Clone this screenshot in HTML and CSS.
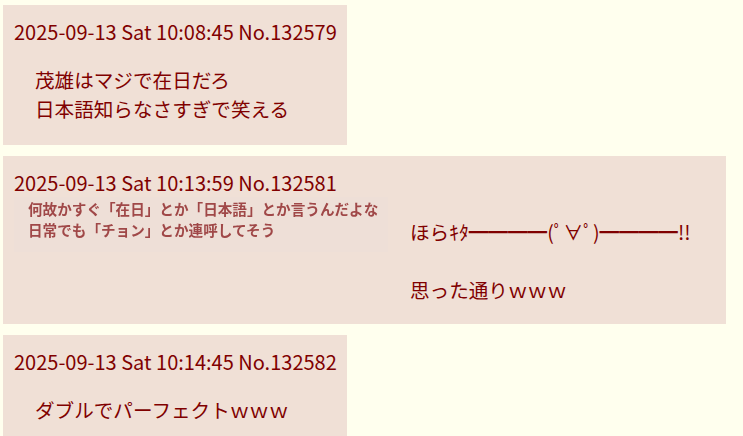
FILE: index.html
```html
<!DOCTYPE html>
<html lang="ja">
<head>
<meta charset="utf-8">
<title>thread</title>
<link rel="stylesheet" href="styles.css">
</head>
<body>
<div class="thread">
  <div class="post">
    <div class="head">2025-09-13 Sat 10:08:45 No.132579</div>
    <div class="quote">茂雄はマジで在日だろ<br>日本語知らなさすぎで笑える</div>
  </div>
  <div class="post">
    <div class="head">2025-09-13 Sat 10:13:59 No.132581</div>
    <div class="media-row">
      <div class="thumb">何故かすぐ「在日」とか「日本語」とか言うんだよな<br>日常でも「チョン」とか連呼してそう</div>
      <div class="quote quote-side">ほらｷﾀ━━━━(ﾟ∀ﾟ)━━━━!!<br><br>思った通りｗｗｗ</div>
    </div>
  </div>
  <div class="post">
    <div class="head">2025-09-13 Sat 10:14:45 No.132582</div>
    <div class="quote">ダブルでパーフェクトｗｗｗ</div>
  </div>
</div>
</body>
</html>
```

FILE: styles.css
```css
html, body {
  margin: 0;
  padding: 0;
  background: #ffffee;
}
body {
  padding: 5px 0 0 3px;
  font-family: "Noto Sans CJK JP", "Noto Sans", sans-serif;
  color: #800000;
  font-size: 19.6px;
  line-height: 29px;
}
.thread {
  display: flex;
  flex-direction: column;
  align-items: flex-start;
  gap: 11px;
}
.post {
  background: #f0e0d6;
  padding: 12px 10px 22px 11px;
}
.post:nth-child(1),
.post:nth-child(3) {
  width: 323px;
}
.post:nth-child(2) {
  width: 702px;
  padding-bottom: 20px;
}
.head {
  white-space: nowrap;
  font-size: 20px;
}
.quote {
  margin: 19px 0 0 21px;
  white-space: nowrap;
}
.media-row {
  display: flex;
  align-items: flex-start;
}
.thumb {
  width: 360px;
  height: 54px;
  padding: 1px 0 0 14px;
  background: #eedfd7;
  color: #a04848;
  font-size: 14.6px;
  line-height: 21px;
  font-weight: 700;
  white-space: nowrap;
  filter: blur(0.35px);
}
.quote-side {
  margin: 20px 0 0 22px;
}
```
